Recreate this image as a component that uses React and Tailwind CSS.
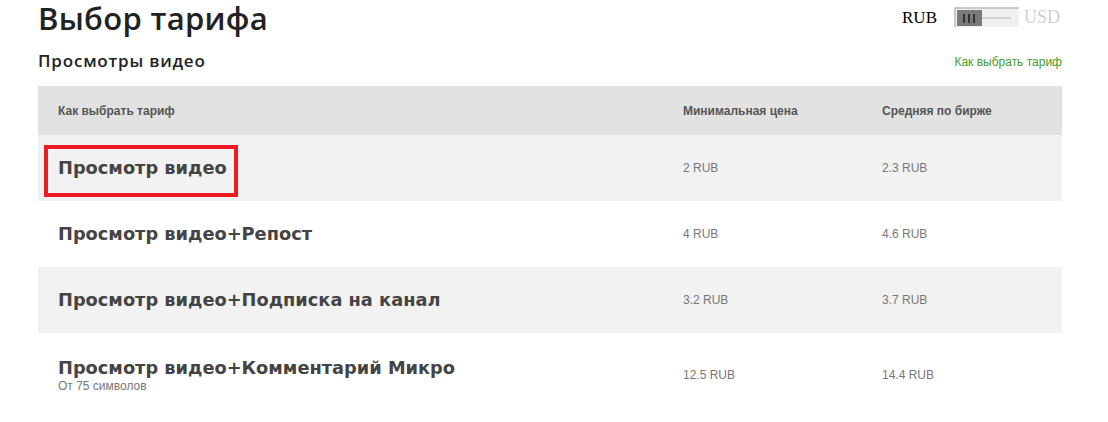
import React from 'react'

const rows = [
  { name: 'Просмотр видео', min: '2 RUB', avg: '2.3 RUB', marked: true },
  { name: 'Просмотр видео+Репост', min: '4 RUB', avg: '4.6 RUB' },
  { name: 'Просмотр видео+Подписка на канал', min: '3.2 RUB', avg: '3.7 RUB' },
  { name: 'Просмотр видео+Комментарий Микро', min: '12.5 RUB', avg: '14.4 RUB', note: 'От 75 символов' },
]

/* currency switch */
function CurrencySwitch() {
  return (
    <div className="flex items-center pt-[7px] mr-[2px]">
      <span className="text-[17px] text-black leading-none" style={{ fontFamily: '"Liberation Serif", serif' }}>RUB</span>
      <div className="w-[65px] h-[20px] ml-[17px] border-t-2 border-l-2 border-[#c8c8c8] bg-[#f0f0f0] flex items-center">
        <div className="w-[25px] h-[16px] bg-[#7a7a7a] flex items-center justify-center gap-[3px] ml-[1px]">
          <span className="w-[2px] h-[9px] bg-[#333]" />
          <span className="w-[2px] h-[9px] bg-[#333]" />
          <span className="w-[2px] h-[9px] bg-[#333]" />
        </div>
        <div className="w-[29px] h-[2px] bg-[#d4d4d4]" />
      </div>
      <span className="text-[18px] text-[#cfcfcf] leading-none ml-[5px]" style={{ fontFamily: '"Liberation Serif", serif' }}>USD</span>
    </div>
  )
}

export default function App() {
  return (
    <div className="w-[1108px] h-[422px] bg-white overflow-hidden font-['Liberation_Sans',Arial,sans-serif]">
      <div className="ml-[38px] w-[1024px]">
        {/* top */}
        <div className="flex items-start justify-between">
          <h1 className="text-[31px] leading-[36px] font-semibold text-[#222] font-['Open_Sans',sans-serif] tracking-[0.3px]">
            Выбор тарифа
          </h1>
          <CurrencySwitch />
        </div>

        <div className="flex items-end justify-between mt-[14px]">
          <h2 className="text-[17px] leading-[22px] font-semibold text-[#222] font-['Open_Sans',sans-serif] tracking-[0.8px]">
            Просмотры видео
          </h2>
          <a className="text-[12px] leading-[18px] text-[#4a9a2a] mb-[1px]">Как выбрать тариф</a>
        </div>

        {/* table */}
        <div className="mt-[14px]">
          <div className="grid grid-cols-[625px_199px_1fr] bg-[#e2e2e2] h-[49px] items-center text-[12px] font-bold text-[#555]">
            <div className="px-5">Как выбрать тариф</div>
            <div className="px-5">Минимальная цена</div>
            <div className="px-5">Средняя по бирже</div>
          </div>

          {rows.map((r, i) => (
            <div
              key={r.name}
              className={`grid grid-cols-[625px_199px_1fr] items-center ${i % 2 === 0 ? 'bg-[#f2f2f2]' : 'bg-white'} ${r.note ? 'py-[24px]' : 'h-[66px]'}`}
            >
              <div className="px-5 relative">
                <div className="text-[17.8px] leading-[22px] font-bold text-[#444] font-['DejaVu_Sans',Verdana,sans-serif]">
                  {r.name}
                </div>
                {r.note && <div className="text-[12px] leading-[14px] text-[#777]">{r.note}</div>}
                {r.marked && (
                  <div className="absolute left-[6px] top-[-12px] w-[194px] h-[52px] border-4 border-[#ed1c24]" />
                )}
              </div>
              <div className="px-5 text-[12px] text-[#777]">{r.min}</div>
              <div className="px-5 text-[12px] text-[#777]">{r.avg}</div>
            </div>
          ))}
        </div>
      </div>
    </div>
  )
}
